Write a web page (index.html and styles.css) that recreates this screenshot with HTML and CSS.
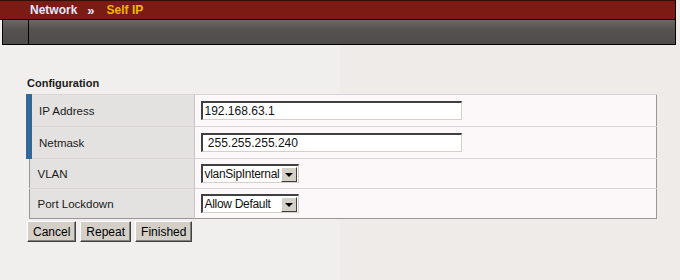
FILE: index.html
```html
<!DOCTYPE html>
<html lang="en">
<head>
    <meta charset="UTF-8">
    <title>Self IP</title>
    <link rel="stylesheet" href="styles.css">
</head>
<body>
    <div class="crumbs">
        <span class="crumb">Network</span>
        <span class="sep">&raquo;</span>
        <span class="crumb current">Self IP</span>
    </div>
    <div class="toolbar">
        <div class="tab"></div>
    </div>
    <div class="content">
        <h2>Configuration</h2>
        <table class="config">
            <tr>
                <td class="label required">IP Address</td>
                <td class="value"><input type="text" class="text-field" value="192.168.63.1"></td>
            </tr>
            <tr>
                <td class="label required">Netmask</td>
                <td class="value"><input type="text" class="text-field" value=" 255.255.255.240"></td>
            </tr>
            <tr class="short">
                <td class="label">VLAN</td>
                <td class="value">
                    <div class="select"><span>vlanSipInternal</span><i class="arrow"></i></div>
                </td>
            </tr>
            <tr class="short">
                <td class="label">Port Lockdown</td>
                <td class="value">
                    <div class="select"><span>Allow Default</span><i class="arrow"></i></div>
                </td>
            </tr>
        </table>
        <div class="buttons">
            <button class="btn">Cancel</button>
            <button class="btn">Repeat</button>
            <button class="btn">Finished</button>
        </div>
    </div>
</body>
</html>
```

FILE: styles.css
```css
body {
    margin: 0;
    font-family: "Liberation Sans", Arial, sans-serif;
    font-size: 11px;
    color: #1a1a1a;
    background: linear-gradient(to right, #f1efed 0, #f1efed 340px, #eeebe9 340px);
    height: 280px;
    overflow: hidden;
}
.crumbs {
    width: 645px;
    height: 18px;
    background: #7b1b13;
    border-top: 1px solid #3a0a06;
    border-right: 1px solid #000;
    border-bottom: 1px solid #000;
    display: flex;
    align-items: center;
    padding-left: 30px;
    font-size: 12px;
    font-weight: bold;
}
.crumb {
    color: #e6e6ff;
}
.sep {
    color: #e6e6ff;
    margin: 0 12px 0 10px;
    font-size: 13px;
}
.crumb.current {
    color: #f2b705;
}
.toolbar {
    margin-left: 2px;
    width: 672px;
    height: 24px;
    border: 1px solid #000;
    border-top: none;
    background: linear-gradient(#6a6765, #555250 40%, #4f4d4b);
    display: flex;
}
.tab {
    width: 25px;
    border-right: 1px solid #000;
}
.content {
    padding: 32px 0 0 26px;
}
h2 {
    margin: 0 0 5px 1px;
    font-size: 11px;
    font-weight: bold;
    line-height: 12px;
}
.config {
    width: 631px;
    border-collapse: collapse;
    border: 1px solid #9a9698;
}
.config td {
    border-top: 1px solid #d9d5d6;
    height: 32px;
    padding: 0;
    box-sizing: border-box;
}
.config tr.short td {
    height: 30px;
}
.label {
    width: 165px;
    background: #e4e2e0;
    border-right: 1px solid #c9c5c4;
    padding-left: 8px !important;
    font-size: 11.5px;
}
.label.required {
    border-left: 6px solid #336699;
    padding-left: 7px !important;
}
.value {
    background: #fcf8fa;
    padding-left: 6px !important;
}
.text-field {
    display: block;
    width: 261px;
    height: 19px;
    box-sizing: border-box;
    border-style: solid;
    border-width: 2px 1px 1px 2px;
    border-color: #404040 #d4d0c8 #d4d0c8 #404040;
    background: #fff;
    font-family: "Liberation Sans", Arial, sans-serif;
    font-size: 12px;
    padding: 0 2px;
    margin: 0;
    color: #111;
}
.select {
    width: 98px;
    height: 19px;
    box-sizing: border-box;
    border-style: solid;
    border-width: 2px 1px 1px 2px;
    border-color: #404040 #d4d0c8 #d4d0c8 #404040;
    background: #fff;
    display: flex;
    align-items: center;
    font-size: 12px;
    color: #111;
    letter-spacing: -0.3px;
}
.select span {
    flex: 1;
    padding-left: 2px;
    white-space: nowrap;
    overflow: hidden;
}
.arrow {
    width: 14px;
    height: 13px;
    margin-right: 1px;
    background: #d4d0c8;
    border: 1px solid;
    border-color: #fff #404040 #404040 #fff;
    position: relative;
}
.arrow::after {
    content: "";
    position: absolute;
    left: 3px;
    top: 5px;
    border-left: 4px solid transparent;
    border-right: 4px solid transparent;
    border-top: 4px solid #000;
}
.buttons {
    display: flex;
    gap: 4px;
    margin-top: 2px;
    margin-left: 1px;
}
.btn {
    height: 21px;
    padding: 0 5px;
    background: #d4d0c8;
    border: 1px solid;
    border-color: #fff #404040 #404040 #fff;
    box-shadow: inset -1px -1px 0 #808080;
    font-family: "Liberation Sans", Arial, sans-serif;
    font-size: 12px;
    color: #000;
}
```
